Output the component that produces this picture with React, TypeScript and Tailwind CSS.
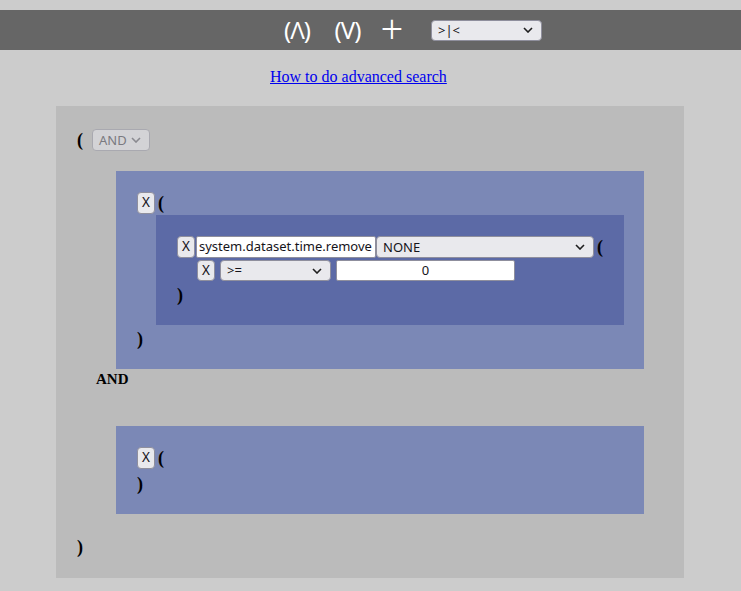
import React from "react";

const sans = "font-['Noto_Sans','Open_Sans',sans-serif]";
const serif = "font-['Liberation_Serif','Times_New_Roman',serif]";

function Chevron({ color = "#1f1f1f" }: { color?: string }) {
  return (
    <svg width="10" height="6" viewBox="0 0 10 6" className="shrink-0">
      <path d="M1 1 L5 5 L9 1" fill="none" stroke={color} strokeWidth="1.6" />
    </svg>
  );
}

function Sel({
  label,
  w,
  h = 22,
  disabled = false,
}: {
  label: string;
  w: number;
  h?: number;
  disabled?: boolean;
}) {
  return (
    <div
      className={`flex items-center justify-between rounded-[4px] border pl-[6px] pr-[8px] text-[13px] ${sans} ${
        disabled
          ? "border-[#a9a9b0] bg-[#d3d3d6] text-[#7a7a80]"
          : "border-[#8f8f9d] bg-[#e9e9ed] text-[#15141a]"
      }`}
      style={{ width: w, height: h }}
    >
      <span className="leading-none">{label}</span>
      <Chevron color={disabled ? "#8a8a90" : "#1f1f1f"} />
    </div>
  );
}

function XBtn({ h = 22 }: { h?: number }) {
  return (
    <button
      className={`flex w-[18px] items-center justify-center rounded-[4px] border border-[#8f8f9d] bg-[#e9e9ed] text-[13.5px] leading-none text-[#15141a] ${sans}`}
      style={{ height: h }}
    >
      X
    </button>
  );
}

function Paren({ c, cls = "" }: { c: string; cls?: string }) {
  return (
    <span className={`text-[18px] font-bold leading-none text-black ${serif} ${cls}`}>
      {c}
    </span>
  );
}

export default function App() {
  return (
    <div className="min-h-[591px] w-full bg-[#cccccc] pt-[10px]">
      {/* top bar */}
      <div className="flex h-[40px] items-center bg-[#666666] pl-[281px] text-white">
        <span className={`flex w-[32px] justify-center text-[24px] leading-none tracking-[-1px] ${sans}`}>(Λ)</span>
        <span className={`ml-[18px] flex w-[33px] justify-center text-[24px] leading-none tracking-[-1px] ${sans}`}>(V)</span>
        <span className={`ml-[18px] flex h-[40px] w-[20px] items-center justify-center pb-[3px] text-[40px] font-light leading-none ${sans}`}>+</span>
        <div className="ml-[29px]">
          <Sel label=">|<" w={111} h={21} />
        </div>
      </div>

      {/* link */}
      <div className="pl-[270px] pt-[14px]">
        <a href="#" className={`text-[16px] leading-[18px] text-[#0000ee] underline ${serif}`}>
          How to do advanced search
        </a>
      </div>

      {/* outer */}
      <div className="ml-[56px] mt-[18px] h-[472px] w-[628px] bg-[#bbbbbb] pl-[21px] pt-[23px]">
        <div className="flex h-[22px] items-center">
          <Paren c="(" />
          <div className="ml-[9px]">
            <Sel label="AND" w={58} disabled />
          </div>
        </div>

        {/* blue box 1 */}
        <div className="ml-[39px] mt-[20px] h-[198px] w-[528px] bg-[#7b88b6] pl-[21px] pt-[21px]">
          <div className="flex h-[22px] items-center">
            <XBtn />
            <Paren c="(" cls="ml-[3px]" />
          </div>
          <div className="ml-[19px] mt-[1px] h-[110px] w-[468px] bg-[#5c6aa6] pl-[21px] pt-[21px]">
            <div className="flex h-[22px] items-center">
              <XBtn />
              <div
                className={`ml-[1px] flex h-[22px] w-[180px] items-center overflow-hidden rounded-[2px] border border-[#8f8f9d] bg-white pl-[2px] text-[13px] whitespace-nowrap text-[#15141a] ${sans}`}
              >
                system.dataset.time.remove
              </div>
              <Sel label="NONE" w={218} />
              <Paren c="(" cls="ml-[3px]" />
            </div>
            <div className="ml-[20px] mt-[2px] flex h-[21px] items-center">
              <XBtn h={21} />
              <div className="ml-[5px]">
                <Sel label=">=" w={111} h={21} />
              </div>
              <div
                className={`ml-[5px] flex h-[21px] w-[179px] items-center justify-center rounded-[2px] border border-[#8f8f9d] bg-white text-[13px] text-[#15141a] ${sans}`}
              >
                0
              </div>
            </div>
            <div className="mt-[5px] flex h-[18px] items-center">
              <Paren c=")" />
            </div>
          </div>
          <div className="mt-[5px] flex h-[18px] items-center">
            <Paren c=")" />
          </div>
        </div>

        <div className={`ml-[19px] mt-[1px] h-[18px] text-[15px] font-bold leading-[18px] text-black ${serif}`}>
          AND
        </div>

        {/* blue box 2 */}
        <div className="ml-[39px] mt-[38px] h-[88px] w-[528px] bg-[#7b88b6] pl-[21px] pt-[21px]">
          <div className="flex h-[22px] items-center">
            <XBtn />
            <Paren c="(" cls="ml-[3px]" />
          </div>
          <div className="mt-[6px] flex h-[18px] items-center">
            <Paren c=")" />
          </div>
        </div>

        <div className="mt-[24px] flex h-[18px] items-center">
          <Paren c=")" />
        </div>
      </div>
    </div>
  );
}
